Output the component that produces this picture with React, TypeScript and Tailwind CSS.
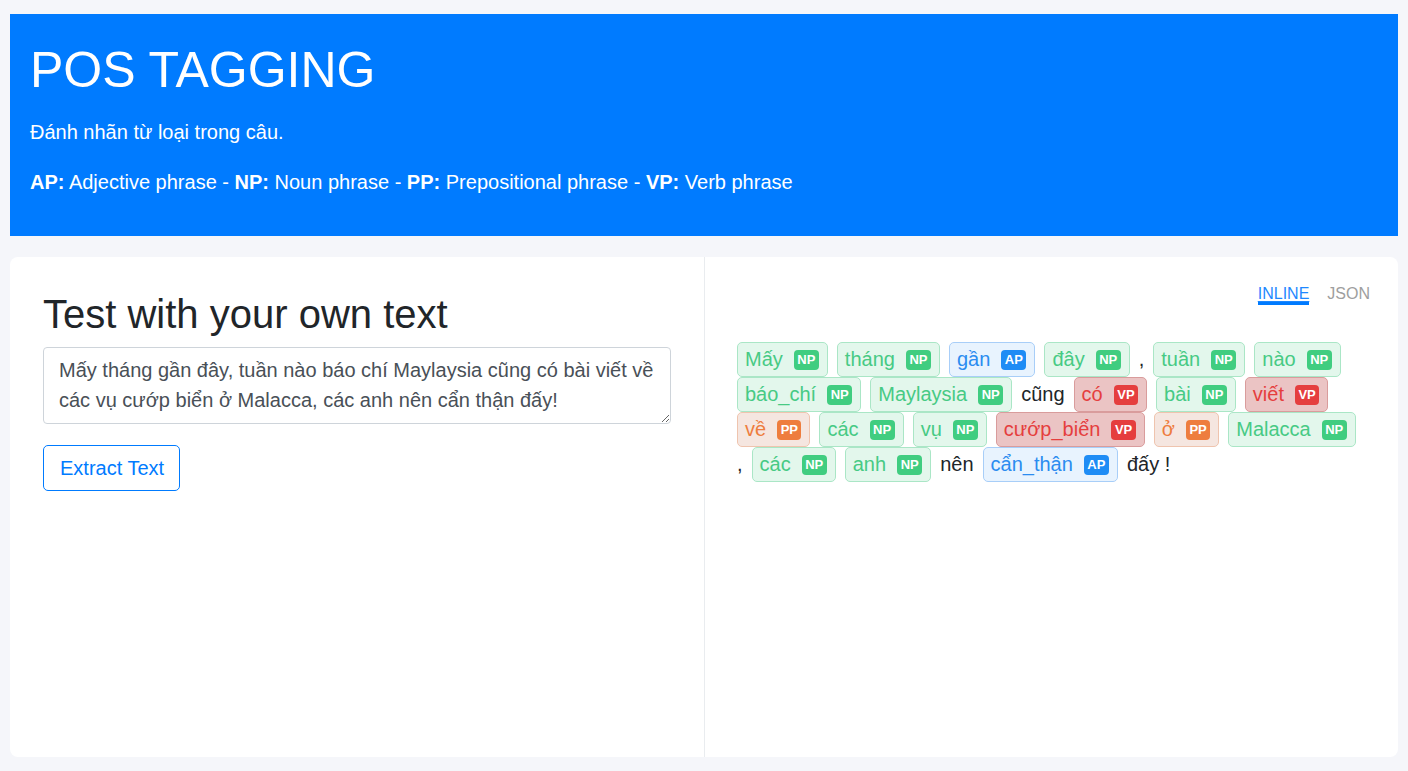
import React from "react";

type Tok = { w: string; t?: "NP" | "AP" | "VP" | "PP" };

const tokens: Tok[] = [
  { w: "Mấy", t: "NP" },
  { w: "tháng", t: "NP" },
  { w: "gần", t: "AP" },
  { w: "đây", t: "NP" },
  { w: "," },
  { w: "tuần", t: "NP" },
  { w: "nào", t: "NP" },
  { w: "báo_chí", t: "NP" },
  { w: "Maylaysia", t: "NP" },
  { w: "cũng" },
  { w: "có", t: "VP" },
  { w: "bài", t: "NP" },
  { w: "viết", t: "VP" },
  { w: "về", t: "PP" },
  { w: "các", t: "NP" },
  { w: "vụ", t: "NP" },
  { w: "cướp_biển", t: "VP" },
  { w: "ở", t: "PP" },
  { w: "Malacca", t: "NP" },
  { w: "," },
  { w: "các", t: "NP" },
  { w: "anh", t: "NP" },
  { w: "nên" },
  { w: "cẩn_thận", t: "AP" },
  { w: "đấy !" },
];

const styles: Record<string, { box: string; badge: string }> = {
  NP: {
    box: "bg-[#e3f7ec] border-[#aae6c6] text-[#47ca84]",
    badge: "bg-[#40cd80]",
  },
  AP: {
    box: "bg-[#e8f3fe] border-[#a8cef8] text-[#2b8cf0]",
    badge: "bg-[#1e8cf5]",
  },
  VP: {
    box: "bg-[#ebc4c4] border-[#d99c9c] text-[#e53e3e]",
    badge: "bg-[#e53e3e]",
  },
  PP: {
    box: "bg-[#f5e6e0] border-[#efc4ae] text-[#ee7d3e]",
    badge: "bg-[#ee7d3e]",
  },
};

function Token({ tok }: { tok: Tok }) {
  if (!tok.t) {
    return (
      <span className="py-[3px] leading-[29px] text-[#212529]">{tok.w}</span>
    );
  }
  const s = styles[tok.t];
  return (
    <span
      className={`flex items-center rounded-[5px] border pl-[7px] pr-[8px] py-[2px] leading-[29px] ${s.box}`}
    >
      <span>{tok.w}</span>
      <span
        className={`ml-[11px] flex h-[20px] items-center rounded-[4px] px-[3.5px] text-[13px] font-bold leading-none text-white ${s.badge}`}
      >
        {tok.t}
      </span>
    </span>
  );
}

export default function App() {
  return (
    <div
      className="min-h-[771px] bg-[#f5f6fa] px-[10px] pt-[14px] pb-[14px] text-[20px] text-[#212529]"
      style={{ fontFamily: '"Liberation Sans", Arial, sans-serif' }}
    >
      <header className="bg-[#007bff] px-[20px] pt-[26px] pb-[39px] text-white">
        <h1 className="mb-[17px] text-[50px] font-normal leading-[60px]">
          POS TAGGING
        </h1>
        <p className="mb-[20px] leading-[30px]">Đánh nhãn từ loại trong câu.</p>
        <p className="leading-[30px]">
          <b>AP:</b> Adjective phrase - <b>NP:</b> Noun phrase - <b>PP:</b>{" "}
          Prepositional phrase - <b>VP:</b> Verb phrase
        </p>
      </header>

      <main className="mt-[21px] grid h-[500px] grid-cols-2 overflow-hidden rounded-[8px] bg-white">
        <section className="px-[33px] pt-[33px]">
          <h2 className="mb-[9px] text-[40px] font-normal leading-[48px] text-[#212529]">
            Test with your own text
          </h2>
          <textarea
            className="block h-[77px] w-full rounded-[4px] border border-[#ced4da] px-[15px] py-[7px] text-[20px] leading-[30px] text-[#495057] outline-none"
            defaultValue="Mấy tháng gần đây, tuần nào báo chí Maylaysia cũng có bài viết về các vụ cướp biển ở Malacca, các anh nên cẩn thận đấy!"
          />
          <button className="mt-[21px] rounded-[5px] border border-[#007bff] pl-[16px] pr-[15px] py-[7px] text-[20px] leading-[30px] text-[#007bff]">
            Extract Text
          </button>
        </section>

        <section className="border-l border-[#e9ecef] pl-[32px] pr-[32px] pt-[29px]">
          <div className="mr-[-4px] flex justify-end gap-[18px] text-[16px] leading-[16px]">
            <span className="border-b-[3px] border-[#007bff] text-[#1e88ff] underline decoration-1 underline-offset-[2px]">
              INLINE
            </span>
            <span className="text-[#9e9e9e]">JSON</span>
          </div>
          <div className="mt-[37px] flex flex-wrap items-center gap-x-[9px] gap-y-0">
            {tokens.map((tok, i) => (
              <Token key={i} tok={tok} />
            ))}
          </div>
        </section>
      </main>
    </div>
  );
}
